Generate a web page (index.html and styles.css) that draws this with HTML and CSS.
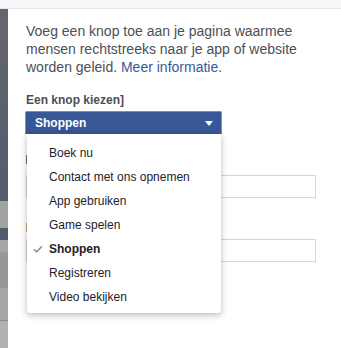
FILE: index.html
```html
<!DOCTYPE html>
<html lang="nl">
<head>
<meta charset="utf-8">
<title>Knop kiezen</title>
<link rel="stylesheet" href="styles.css">
</head>
<body>
<div class="topbar"></div>
<div class="main">
  <div class="strip">
    <div class="seg seg-dark"></div>
    <div class="seg seg-light1"></div>
    <div class="seg seg-band"></div>
    <div class="seg seg-light2"></div>
    <div class="seg seg-mid"></div>
    <div class="seg seg-light3"></div>
    <div class="seg seg-line"></div>
    <div class="seg seg-bottom"></div>
  </div>
  <div class="panel">
    <p class="intro">Voeg een knop toe aan je pagina waarmee mensen rechtstreeks naar je app of website worden geleid. <a class="link" href="#">Meer informatie</a>.</p>
    <div class="label">Een knop kiezen]</div>
    <div class="select-wrap">
      <div class="select">
        <span class="select-text">Shoppen</span>
        <span class="caret"></span>
      </div>
      <ul class="menu">
        <li class="item">Boek nu</li>
        <li class="item">Contact met ons opnemen</li>
        <li class="item">App gebruiken</li>
        <li class="item">Game spelen</li>
        <li class="item selected"><svg class="check" width="10" height="8" viewBox="0 0 10 8"><polyline points="1,4.2 3.6,6.8 9,1.2" fill="none" stroke="#8d949e" stroke-width="1.6"/></svg>Shoppen</li>
        <li class="item">Registreren</li>
        <li class="item">Video bekijken</li>
      </ul>
    </div>
    <div class="field-label first"><span class="tick"></span></div>
    <div class="input"></div>
    <div class="field-label second"><span class="tick tan"></span></div>
    <div class="input"></div>
  </div>
</div>
</body>
</html>
```
FILE: styles.css
```css
html, body {
  margin: 0;
  padding: 0;
  background: #ffffff;
  height: 100%;
  overflow: hidden;
}
body {
  font-family: "Liberation Sans", Arial, Helvetica, sans-serif;
  color: #4b4f56;
}
.topbar {
  height: 8px;
  background: #f5f6f7;
  border-bottom: 1px solid #e3e4e6;
}
.main {
  display: flex;
  height: 339px;
}
.strip {
  width: 8px;
  display: flex;
  flex-direction: column;
  flex-shrink: 0;
}
.seg { width: 8px; }
.seg-dark { height: 192px; background: linear-gradient(#65676f, #545b6c); }
.seg-light1 { height: 27px; background: #a3a3a3; }
.seg-band { height: 12px; background: #535a6b; }
.seg-light2 { height: 12px; background: #a6a6a6; }
.seg-mid { height: 36px; background: #989898; }
.seg-light3 { height: 32px; background: #a7a7a7; }
.seg-line { height: 1px; background: #8a8a8a; }
.seg-bottom { flex: 1; background: #b1b1b1; }
.panel {
  flex: 1;
  padding: 13px 0 0 18px;
  background: #ffffff;
}
.intro {
  margin: 0;
  font-size: 14px;
  line-height: 18px;
  color: #4b4f56;
  width: 300px;
}
.link {
  color: #365899;
  text-decoration: none;
}
.label {
  margin-top: 16px;
  font-size: 12px;
  font-weight: bold;
  line-height: 16px;
  color: #4b4f56;
}
.select-wrap {
  position: relative;
  margin-top: 3px;
  width: 197px;
}
.select {
  box-sizing: border-box;
  height: 23px;
  width: 197px;
  margin-left: -1px;
  background: #385796;
  border: 1px solid #6f8fd6;
  border-bottom-color: #385796;
  display: flex;
  align-items: center;
  justify-content: space-between;
  padding: 0 8px 0 9px;
  border-radius: 2px 2px 0 0;
}
.select-text {
  color: #ffffff;
  font-size: 12px;
  font-weight: bold;
}
.caret {
  width: 0;
  height: 0;
  border-left: 4px solid transparent;
  border-right: 4px solid transparent;
  border-top: 5px solid #ffffff;
  margin-top: 1px;
}
.menu {
  position: absolute;
  left: 1px;
  top: 23px;
  width: 194px;
  margin: 0;
  padding: 7px 0 4px;
  list-style: none;
  background: #ffffff;
  box-shadow: 0 2px 7px rgba(0, 0, 0, 0.28);
  border-radius: 0 0 3px 3px;
  z-index: 2;
}
.item {
  position: relative;
  height: 24px;
  line-height: 24px;
  padding-left: 22px;
  font-size: 12px;
  color: #1d2129;
}
.item.selected {
  font-weight: bold;
}
.check {
  position: absolute;
  left: 6px;
  top: 8px;
}
.field-label {
  height: 16px;
  display: flex;
  align-items: center;
}
.tick {
  display: block;
  width: 2px;
  height: 9px;
  background: #6b6f76;
}
.tick.tan { background: #c9a57e; }
.field-label.first { margin-top: 17px; }
.field-label.second { margin-top: 21px; }
.input {
  box-sizing: border-box;
  width: 290px;
  height: 23px;
  border: 1px solid #d3d6db;
  background: #ffffff;
  margin-top: 8px;
}
.field-label.second + .input { margin-top: 4px; }
```
